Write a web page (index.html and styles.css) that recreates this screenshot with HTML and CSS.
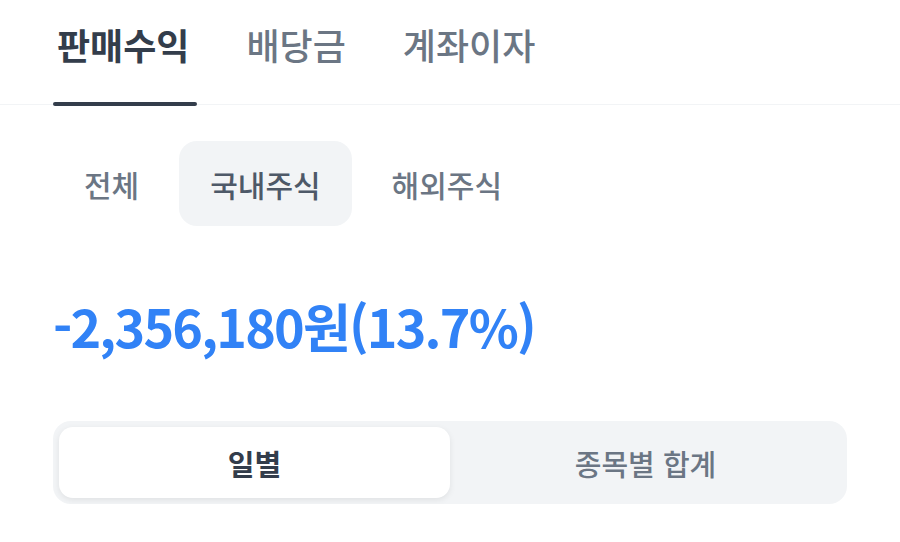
FILE: index.html
```html
<!DOCTYPE html>
<html lang="ko">
<head>
    <meta charset="UTF-8">
    <meta name="viewport" content="width=device-width, initial-scale=1.0">
    <title>수익 내역</title>
    <link rel="stylesheet" href="styles.css">
</head>
<body>
    <nav class="tabs">
        <a class="tab active">판매수익</a>
        <a class="tab">배당금</a>
        <a class="tab">계좌이자</a>
    </nav>

    <div class="chips">
        <button class="chip">전체</button>
        <button class="chip selected">국내주식</button>
        <button class="chip">해외주식</button>
    </div>

    <div class="amount">-2,356,180원(13.7%)</div>

    <div class="segment">
        <button class="seg-item on">일별</button>
        <button class="seg-item">종목별 합계</button>
    </div>
</body>
</html>
```

FILE: styles.css
```css
* {
    box-sizing: border-box;
}
body {
    margin: 0;
    font-family: "Noto Sans CJK KR", "Noto Sans", sans-serif;
    background-color: #ffffff;
    color: #333d4b;
}
.tabs {
    display: flex;
    gap: 45px;
    height: 105px;
    padding: 0 53px;
    border-bottom: 1px solid #f2f4f6;
}
.tab {
    position: relative;
    font-size: 36px;
    font-weight: 500;
    line-height: 36px;
    padding: 26px 8px 0 4px;
    color: #6b7684;
}
.tab.active {
    font-weight: 700;
    color: #333d4b;
}
.tab.active::after {
    content: "";
    position: absolute;
    left: 0;
    right: 0;
    bottom: -2px;
    height: 4px;
    border-radius: 2px;
    background-color: #333d4b;
}
.chips {
    display: flex;
    gap: 9px;
    padding: 0 53px;
    margin-top: 36px;
}
button {
    font-family: inherit;
    border: none;
    background: none;
    cursor: pointer;
}
.chip {
    height: 85px;
    padding: 0 31px;
    border-radius: 18px;
    font-size: 30px;
    font-weight: 500;
    color: #6b7684;
}
.chip.selected {
    background-color: #f2f4f6;
    color: #4e5968;
}
.amount {
    padding: 0 53px;
    margin-top: 70px;
    font-size: 52px;
    font-weight: 700;
    line-height: 60px;
    letter-spacing: -1.8px;
    color: #3182f6;
}
.segment {
    display: grid;
    grid-template-columns: 1fr 1fr;
    margin: 65px 53px 0;
    padding: 6px;
    height: 83px;
    border-radius: 18px;
    background-color: #f2f4f6;
}
.seg-item {
    border-radius: 14px;
    font-size: 29px;
    font-weight: 500;
    color: #6b7684;
}
.seg-item.on {
    background-color: #ffffff;
    color: #333d4b;
    font-weight: 700;
    box-shadow: 0 2px 6px rgba(0, 0, 0, 0.08);
}
```
